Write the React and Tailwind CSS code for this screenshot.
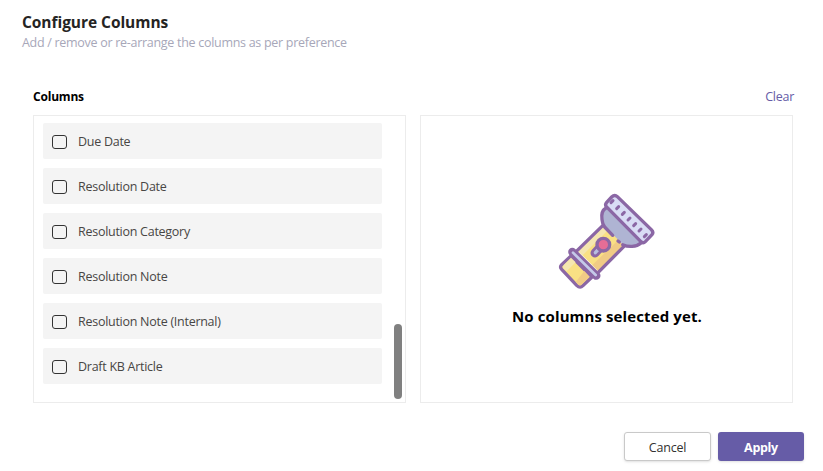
import React, { useState } from 'react';

const COLUMNS = [
  'Due Date',
  'Resolution Date',
  'Resolution Category',
  'Resolution Note',
  'Resolution Note (Internal)',
  'Draft KB Article'
];

const TEETH = [[186, 50], [203, 68], [220, 85], [237, 102], [254, 119], [270, 135], [286, 152]];

const Flashlight = () => (
  <svg className="ml-[2px]" width="115" height="110" viewBox="0 0 345 330" fill="none" stroke="#8b67a5" strokeWidth="10" strokeLinecap="round" strokeLinejoin="round">
    {/* barrel */}
    <path d="M158 122 L82 196 L147 260 L222 184 L190 145 Z" fill="#f9e084" stroke="none" />
    <path d="M158 122 L82 196 L98 211 L172 137 Z" fill="#f5e6b0" stroke="none" />
    <path d="M204 166 L127 240 L147 260 L222 184 Z" fill="#f0cb85" stroke="none" />
    <path d="M158 122 L82 196 M222 184 L147 260" />
    {/* tail */}
    <path d="M63 213 L35 239 Q28 246 35 253 L80 301 Q90 311 99 302 L126 276 Z" fill="#f9e084" />
    <path d="M63 218 L41 240 Q36 246 41 251 L50 259 L77 232 Z" fill="#f5e6b0" stroke="none" />
    <path d="M103 258 L77 291 L83 297 Q90 304 96 298 L119 275 Z" fill="#f0cb85" stroke="none" />
    {/* ring */}
    <path d="M67 201 L139 272" strokeWidth="25" />
    <path d="M69 203 L137 270" stroke="#c5cae9" strokeWidth="8" />
    {/* reflector */}
    <path d="M168 69 Q152 78 156 104 Q157 117 164 123 L190 150 L218 177 Q226 183 242 184 Q263 184 273 174 Z" fill="#afb4d3" stroke="none" />
    <path d="M168 69 Q152 78 156 104 Q157 117 164 126 L188 151 M204 168 L208 171 M218 179 Q232 185 246 184 Q263 183 273 174" />
    {/* head */}
    <path d="M169 65 Q164 59 170 52 L185 36 Q194 27 202 35 L304 134 Q312 142 306 149 L286 170 Q279 177 272 169 Z" fill="#d9dcf5" />
    {TEETH.map(([x, y]) => (
      <path key={x} d={`M${x + 3} ${y - 3} L${x - 3} ${y + 3}`} strokeWidth="9" />
    ))}
    {/* switch */}
    <path d="M155 182 L135 204" strokeWidth="27" />
    <path d="M155 182 L136 203" stroke="#b8bedf" strokeWidth="10" />
    <circle cx="160" cy="179" r="19" fill="#e56d96" />
  </svg>
);

const ColumnRow = ({ label, checked, onToggle }) => (
  <label className="flex h-9 w-[339px] items-center rounded-xs bg-[#f4f4f4] pl-[9px]">
    <input type="checkbox" checked={checked} onChange={onToggle} className="mt-[2px] h-[14px] w-[15px] shrink-0 appearance-none rounded-[3px] border border-[#333] checked:bg-[#665ca7]" />
    <span className="mt-[2px] ml-[11px] text-[12.5px] tracking-[-0.27px] whitespace-nowrap text-[#484644]">{label}</span>
  </label>
);

const App = () => {
  const [selected, setSelected] = useState([]);

  const toggle = (label) => {
    setSelected((prev) => (prev.includes(label) ? prev.filter((c) => c !== label) : [...prev, label]));
  };

  return (
    <div className="flex h-[471px] w-[823px] flex-col overflow-hidden bg-white font-['Open_Sans','Noto_Sans',sans-serif]">
      <header className="pt-[12px] pl-[22px]">
        <h1 className="text-[15.5px] leading-5 font-bold tracking-[-0.05px] whitespace-nowrap text-[#252423]">Configure Columns</h1>
        <p className="pt-px text-[12.5px] leading-5 tracking-[-0.29px] whitespace-nowrap text-[#a7a7b9]">Add / remove or re-arrange the columns as per preference</p>
      </header>

      <div className="mt-[34px] mr-[29px] ml-[33px] flex h-5 items-center justify-between text-[12px]">
        <h2 className="font-bold tracking-[-0.2px] text-black">Columns</h2>
        <button onClick={() => setSelected([])} className="text-[12.5px] tracking-[-0.25px] text-[#665ca7]">Clear</button>
      </div>

      <main className="mt-[8px] ml-[33px] flex gap-[14px]">
        {/* Available columns */}
        <section className="flex h-[288px] w-[373px] justify-between border border-[#ececec] pt-[7px] pr-[3px] pl-[9px]">
          <div className="flex flex-col gap-[9px]">
            {COLUMNS.map((label) => (
              <ColumnRow key={label} label={label} checked={selected.includes(label)} onToggle={() => toggle(label)} />
            ))}
          </div>
          <div className="mb-[3px] h-[75px] w-2 self-end rounded-full bg-[#808080]"></div>
        </section>

        {/* Selected columns */}
        <section className="flex h-[288px] w-[373px] flex-col items-center border border-[#ececec] pt-[69px]">
          {selected.length === 0 ? (
            <>
              <Flashlight />
              <p className="mt-[9px] ml-px text-[15px] leading-6 font-bold tracking-[0.12px] whitespace-nowrap text-black">No columns selected yet.</p>
            </>
          ) : (
            selected.map((label) => <p key={label} className="text-xs leading-6 text-[#484644]">{label}</p>)
          )}
        </section>
      </main>

      <footer className="mt-[29px] mr-[19px] flex justify-end gap-[7px] text-[12.5px]">
        <button className="h-[29px] w-[87px] rounded-[3px] border border-[#c9c9c9] bg-white pt-[3px] font-medium tracking-[-0.2px] text-[#323130] shadow-sm">Cancel</button>
        <button className="h-[29px] w-[86px] rounded-[3px] bg-[#665ca7] pt-[3px] font-bold tracking-[-0.3px] text-white shadow-sm">Apply</button>
      </footer>
    </div>
  );
};

export default App;
